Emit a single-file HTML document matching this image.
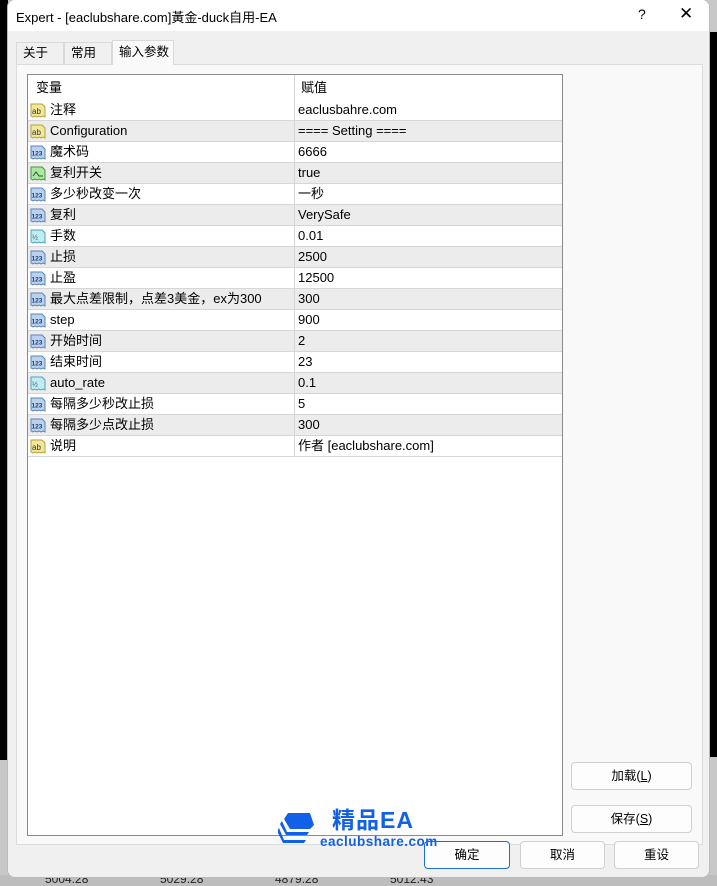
<!DOCTYPE html>
<html><head><meta charset="utf-8"><style>
*{box-sizing:border-box;margin:0;padding:0}
body{width:717px;height:886px;position:relative;overflow:hidden;background:#c8c8c8;font-family:"Liberation Sans","Noto Sans CJK SC",sans-serif;font-size:12px;color:#000}
.abs{position:absolute}
#win{left:8px;top:0;width:701px;height:877px;background:#f0f0f0;border-radius:7px;box-shadow:0 0 0 1px #bbb;overflow:hidden}
#title{left:0;top:0;width:701px;height:31px;background:#fff}
.tab{position:absolute;top:42px;height:23px;border:1px solid #d9d9d9;border-bottom:none;background:#f0f0f0;font-size:12.5px;line-height:21px;padding-left:6px}
#panel{left:8px;top:64px;width:687px;height:781px;background:#f9f9f9;border:1px solid #dcdcdc}
#tbl{left:19px;top:74px;width:536px;height:762px;background:#fff;border:1px solid #8a8a8a}
.row{position:absolute;left:0;width:534px;height:21px;border-bottom:1px solid #d6d6d6;line-height:20px;font-size:13px}
.row.g{background:#ececec}
.row .n{position:absolute;left:22px;top:0}
.row .v{position:absolute;left:270px;top:0}
.row .d{position:absolute;left:266px;top:0;width:1px;height:21px;background:#d6d6d6}
.ic{position:absolute;left:2px;top:3px;width:16px;height:15px}
.btn{position:absolute;background:#fdfdfd;border:1px solid #d0d0d0;border-radius:4px;text-align:center;font-size:12.5px}
</style></head><body>
<div class="abs" style="left:0;top:0;width:8px;height:760px;background:#000"></div>
<div class="abs" style="left:709px;top:32px;width:8px;height:725px;background:#000"></div>
<div class="abs" style="left:0;top:875px;width:717px;height:11px;background:#bdbdbd;font-size:12px;color:#222"><span class="abs" style="left:45px;top:-3px">5004.28</span><span class="abs" style="left:160px;top:-3px">5029.28</span><span class="abs" style="left:275px;top:-3px">4879.28</span><span class="abs" style="left:390px;top:-3px">5012.43</span></div>
<div id="win" class="abs">
<div id="title" class="abs"><span class="abs" style="left:8px;top:7px;font-size:13px">Expert - [eaclubshare.com]黃金-duck自用-EA</span><span class="abs" style="left:630px;top:6px;font-size:14px">?</span><span class="abs" style="left:671px;top:4px;font-size:17px">✕</span></div>
<div class="tab" style="left:8px;width:48px">关于</div>
<div class="tab" style="left:56px;width:48px">常用</div>
<div class="tab" style="left:104px;top:40px;height:25px;width:62px;background:#f9f9f9;z-index:2;line-height:23px">输入参数</div>
<div id="panel" class="abs"></div>
<div id="tbl" class="abs">
<div class="row" style="top:0;height:25px;line-height:25px;border-bottom:none"><span class="abs" style="left:8px">变量</span><div class="d" style="height:25px"></div><span class="abs" style="left:273px">赋值</span></div>
<div id="rows"></div>
</div>
<div class="btn" style="left:563px;top:762px;width:121px;height:28px;line-height:26px">加载(<u>L</u>)</div>
<div class="btn" style="left:563px;top:805px;width:121px;height:28px;line-height:26px">保存(<u>S</u>)</div>
<div class="btn" style="left:416px;top:841px;width:86px;height:28px;line-height:26px;border:1px solid #1a6fd0">确定</div>
<div class="btn" style="left:512px;top:841px;width:85px;height:28px;line-height:26px">取消</div>
<div class="btn" style="left:606px;top:841px;width:85px;height:28px;line-height:26px">重设</div>
<svg class="abs" style="left:270px;top:811px" width="38" height="34" viewBox="0 0 38 34"><path d="M10 2h22l4 12-4 4H12L6 8z" fill="#1160e8"/><path d="M4 10l5 11h22l-2 3H8L2 13z" fill="#1160e8"/><path d="M1 17l5 12h22l-2 3H5L-1 20z" fill="#1160e8"/></svg>
<div class="abs" style="left:324px;top:806px;font-size:23px;line-height:28px;font-weight:bold;color:#1160e8;letter-spacing:1px">精品EA</div>
<div class="abs" style="left:312px;top:834px;font-size:13.5px;line-height:16px;font-weight:bold;color:#1160e8;letter-spacing:0.5px">eaclubshare.com</div>
</div>
<script>
var ab='<svg class="ic" viewBox="0 0 16 15"><path d="M1 1h11l3 3v10l-2-1-2 1-2-1-2 1-2-1-2 1-2-1z" fill="#f3e79a" stroke="#b5a23c"/><text x="2" y="11" font-size="8" font-family="Liberation Sans" fill="#333">ab</text></svg>';
var n123='<svg class="ic" viewBox="0 0 16 15"><path d="M1 1h11l3 3v10l-2-1-2 1-2-1-2 1-2-1-2 1-2-1z" fill="#b9d3ee" stroke="#5a85b5"/><text x="1.5" y="10.5" font-size="6.5" font-family="Liberation Sans" font-weight="bold" fill="#1d3f7a">123</text></svg>';
var half='<svg class="ic" viewBox="0 0 16 15"><path d="M1 1h11l3 3v10l-2-1-2 1-2-1-2 1-2-1-2 1-2-1z" fill="#c3ecf2" stroke="#4aa6b8"/><text x="2" y="10.5" font-size="7" font-family="Liberation Sans" fill="#17607a">½</text></svg>';
var bo='<svg class="ic" viewBox="0 0 16 15"><path d="M1 1h11l3 3v10l-2-1-2 1-2-1-2 1-2-1-2 1-2-1z" fill="#aee6a6" stroke="#3f9a3a"/><path d="M3 10l3-4 3 4h4" stroke="#1e5e1a" fill="none"/></svg>';
var d=[[ab,'注释','eaclusbahre.com'],[ab,'Configuration','==== Setting ===='],[n123,'魔术码','6666'],[bo,'复利开关','true'],[n123,'多少秒改变一次','一秒'],[n123,'复利','VerySafe'],[half,'手数','0.01'],[n123,'止损','2500'],[n123,'止盈','12500'],[n123,'最大点差限制，点差3美金，ex为300','300'],[n123,'step','900'],[n123,'开始时间','2'],[n123,'结束时间','23'],[half,'auto_rate','0.1'],[n123,'每隔多少秒改止损','5'],[n123,'每隔多少点改止损','300'],[ab,'说明','作者 [eaclubshare.com]']];
var h='';d.forEach(function(r,i){h+='<div class="row'+(i%2?' g':'')+'" style="top:'+(25+i*21)+'px">'+r[0]+'<span class="n">'+r[1]+'</span><div class="d"></div><span class="v">'+r[2]+'</span></div>';});
document.getElementById('rows').innerHTML=h;
</script>
</body></html>
